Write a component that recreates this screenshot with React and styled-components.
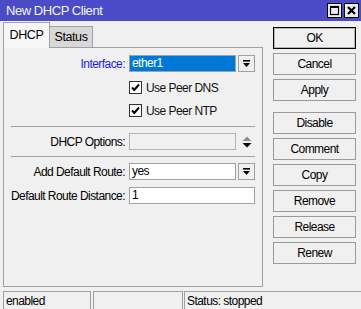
import React from 'react'
import styled, { createGlobalStyle } from 'styled-components'

const GlobalStyle = createGlobalStyle`
  html, body {
    margin: 0;
    padding: 0;
    background: #f0f0f0;
  }
  body {
    font-family: "Liberation Sans", Arial, sans-serif;
    font-size: 12px;
    letter-spacing: -0.55px;
    color: #000;
  }
`

const Window = styled.div`
  width: 361px;
  height: 309px;
  display: flex;
  flex-direction: column;
  background: #f0f0f0;
  overflow: hidden;
`

const TitleBar = styled.div`
  height: 21px;
  flex: none;
  display: flex;
  align-items: center;
  padding-left: 6px;
  background: #4b4bc8;
`

const Title = styled.div`
  color: #f4f4f4;
  font-size: 13px;
  letter-spacing: -0.45px;
`

const TitleButtons = styled.div`
  margin-left: auto;
  margin-right: 2px;
  display: flex;
  gap: 2px;
`

const TitleButton = styled.div`
  width: 15px;
  height: 15px;
  box-sizing: border-box;
  border: 1px solid #000;
  background: #ececec;
  display: flex;
  align-items: center;
  justify-content: center;
`

const Body = styled.div`
  height: 267px;
  flex: none;
  display: flex;
  padding: 2px 0 0 3px;
  box-sizing: border-box;
`

const LeftColumn = styled.div`
  width: 260px;
  display: flex;
  flex-direction: column;
`

const Tabs = styled.div`
  height: 25px;
  display: flex;
  align-items: flex-end;
  position: relative;
  z-index: 1;
  margin-bottom: -1px;
`

const Tab = styled.div`
  box-sizing: border-box;
  width: ${p => (p.$active ? '47px' : '43px')};
  height: ${p => (p.$active ? '26px' : '22px')};
  border: 1px solid #a0a0a0;
  border-left: ${p => (p.$active ? '1px solid #a0a0a0' : 'none')};
  border-bottom: ${p => (p.$active ? 'none' : '1px solid #a0a0a0')};
  background: ${p => (p.$active ? '#f7f7f7' : '#d8d8d8')};
  font-size: 12.5px;
  letter-spacing: -0.4px;
  display: flex;
  align-items: center;
  justify-content: center;
  padding-bottom: ${p => (p.$active ? '2px' : '0')};
`

const Panel = styled.div`
  box-sizing: border-box;
  height: 240px;
  border: 1px solid #a0a0a0;
  padding: 7px 7px 0 0;
  display: flex;
  flex-direction: column;
`

const Row = styled.div`
  height: 17px;
  margin-top: ${p => p.$gap || 0}px;
  display: grid;
  grid-template-columns: 121px 126px;
  column-gap: 4px;
  align-items: center;
`

const Label = styled.div`
  text-align: right;
  white-space: nowrap;
  color: ${p => (p.$accent ? '#1e1ee6' : '#000')};
`

const Field = styled.div`
  display: flex;
  gap: 2px;
  height: 17px;
`

const Input = styled.div`
  box-sizing: border-box;
  height: 17px;
  width: ${p => (p.$full ? '126px' : '108px')};
  border: 1px solid ${p => (p.$disabled ? '#b4b4b4' : '#a0a0a0')};
  background: ${p => (p.$selected ? '#0078d7' : p.$disabled ? '#f0f0f0' : '#fff')};
  color: ${p => (p.$selected ? '#fff' : '#000')};
  padding-left: 2px;
  line-height: 15px;
  white-space: nowrap;
`

const DropButton = styled.div`
  box-sizing: border-box;
  width: 17px;
  height: 17px;
  border: 1px solid #a0a0a0;
  background: #f0f0f0;
  display: flex;
  align-items: center;
  justify-content: center;
`

const Spinner = styled.div`
  width: 17px;
  height: 17px;
  display: flex;
  align-items: center;
  justify-content: center;
`

const Check = styled.div`
  display: flex;
  align-items: center;
  gap: 4px;
  color: #111;
`

const Box = styled.div`
  box-sizing: border-box;
  width: 13px;
  height: 13px;
  border: 1px solid #333;
  background: #fff;
  display: flex;
  align-items: center;
  justify-content: center;
`

const Separator = styled.div`
  height: 1px;
  margin: ${p => p.$top}px 0 0 7px;
  background: #a0a0a0;
`

const ButtonColumn = styled.div`
  width: 83px;
  margin-left: 10px;
  padding-top: 4px;
  display: flex;
  flex-direction: column;
  gap: 4px;
`

const Button = styled.div`
  box-sizing: border-box;
  height: 22px;
  margin-top: ${p => p.$extra || 0}px;
  border: 1px solid ${p => (p.$default ? '#000' : '#9a9a9a')};
  box-shadow: ${p => (p.$default ? 'inset 0 0 0 1px rgba(0,0,0,0.25)' : 'none')};
  background: #f0f0f0;
  display: flex;
  align-items: center;
  justify-content: center;
`

const StatusBar = styled.div`
  height: 18px;
  margin-top: 3px;
  padding-left: 3px;
  display: flex;
  flex: none;
`

const StatusCell = styled.div`
  box-sizing: border-box;
  width: ${p => (p.$width ? `${p.$width}px` : 'auto')};
  flex: ${p => (p.$width ? 'none' : '1')};
  margin-left: ${p => p.$gap || 0}px;
  border: 1px solid #a0a0a0;
  border-bottom: none;
  border-right: ${p => (p.$width ? '1px solid #a0a0a0' : 'none')};
  padding-left: 2px;
  display: flex;
  align-items: center;
  white-space: nowrap;
`

const DropIcon = () => (
  <svg width="9" height="9" viewBox="0 0 9 9">
    <rect x="1" y="1" width="7" height="1.6" fill="#000" />
    <polygon points="1,4 8,4 4.5,8" fill="#000" />
  </svg>
)

const SpinIcon = () => (
  <svg width="10" height="12" viewBox="0 0 10 12">
    <polygon points="0.5,5 9.5,5 5,0.5" fill="#8c8c8c" />
    <polygon points="0.5,7 9.5,7 5,11.5" fill="#000" />
  </svg>
)

const CheckIcon = () => (
  <svg width="11" height="11" viewBox="0 0 11 11">
    <path d="M2 5.5 L4.3 8 L9 2.5" stroke="#000" strokeWidth="2" fill="none" />
  </svg>
)

const MaxIcon = () => (
  <svg width="11" height="11" viewBox="0 0 11 11">
    <rect x="1.5" y="1.5" width="8" height="8" stroke="#000" strokeWidth="1.2" fill="none" />
    <rect x="1" y="1" width="9" height="2" fill="#000" />
  </svg>
)

const CloseIcon = () => (
  <svg width="11" height="11" viewBox="0 0 11 11">
    <path d="M2 2 L9 9 M9 2 L2 9" stroke="#000" strokeWidth="2.2" />
  </svg>
)

const buttons = [
  { label: 'OK', default: true },
  { label: 'Cancel' },
  { label: 'Apply' },
  { label: 'Disable', extra: 7 },
  { label: 'Comment' },
  { label: 'Copy' },
  { label: 'Remove' },
  { label: 'Release' },
  { label: 'Renew' },
]

export default function App() {
  return (
    <>
      <GlobalStyle />
      <Window>
        <TitleBar>
          <Title>New DHCP Client</Title>
          <TitleButtons>
            <TitleButton><MaxIcon /></TitleButton>
            <TitleButton><CloseIcon /></TitleButton>
          </TitleButtons>
        </TitleBar>

        <Body>
          <LeftColumn>
            <Tabs>
              <Tab $active>DHCP</Tab>
              <Tab>Status</Tab>
            </Tabs>
            <Panel>
              <Row>
                <Label $accent>Interface:</Label>
                <Field>
                  <Input $selected>ether1</Input>
                  <DropButton><DropIcon /></DropButton>
                </Field>
              </Row>
              <Row $gap={7}>
                <span />
                <Check><Box><CheckIcon /></Box>Use Peer DNS</Check>
              </Row>
              <Row $gap={6}>
                <span />
                <Check><Box><CheckIcon /></Box>Use Peer NTP</Check>
              </Row>
              <Separator $top={7} />
              <Row $gap={6}>
                <Label>DHCP Options:</Label>
                <Field>
                  <Input $disabled />
                  <Spinner><SpinIcon /></Spinner>
                </Field>
              </Row>
              <Separator $top={6} />
              <Row $gap={6}>
                <Label>Add Default Route:</Label>
                <Field>
                  <Input>yes</Input>
                  <DropButton><DropIcon /></DropButton>
                </Field>
              </Row>
              <Row $gap={7}>
                <Label>Default Route Distance:</Label>
                <Field>
                  <Input $full>1</Input>
                </Field>
              </Row>
            </Panel>
          </LeftColumn>

          <ButtonColumn>
            {buttons.map(b => (
              <Button key={b.label} $default={b.default} $extra={b.extra}>
                {b.label}
              </Button>
            ))}
          </ButtonColumn>
        </Body>

        <StatusBar>
          <StatusCell $width={88}>enabled</StatusCell>
          <StatusCell $width={90} $gap={2} />
          <StatusCell $gap={1}>Status: stopped</StatusCell>
        </StatusBar>
      </Window>
    </>
  )
}
